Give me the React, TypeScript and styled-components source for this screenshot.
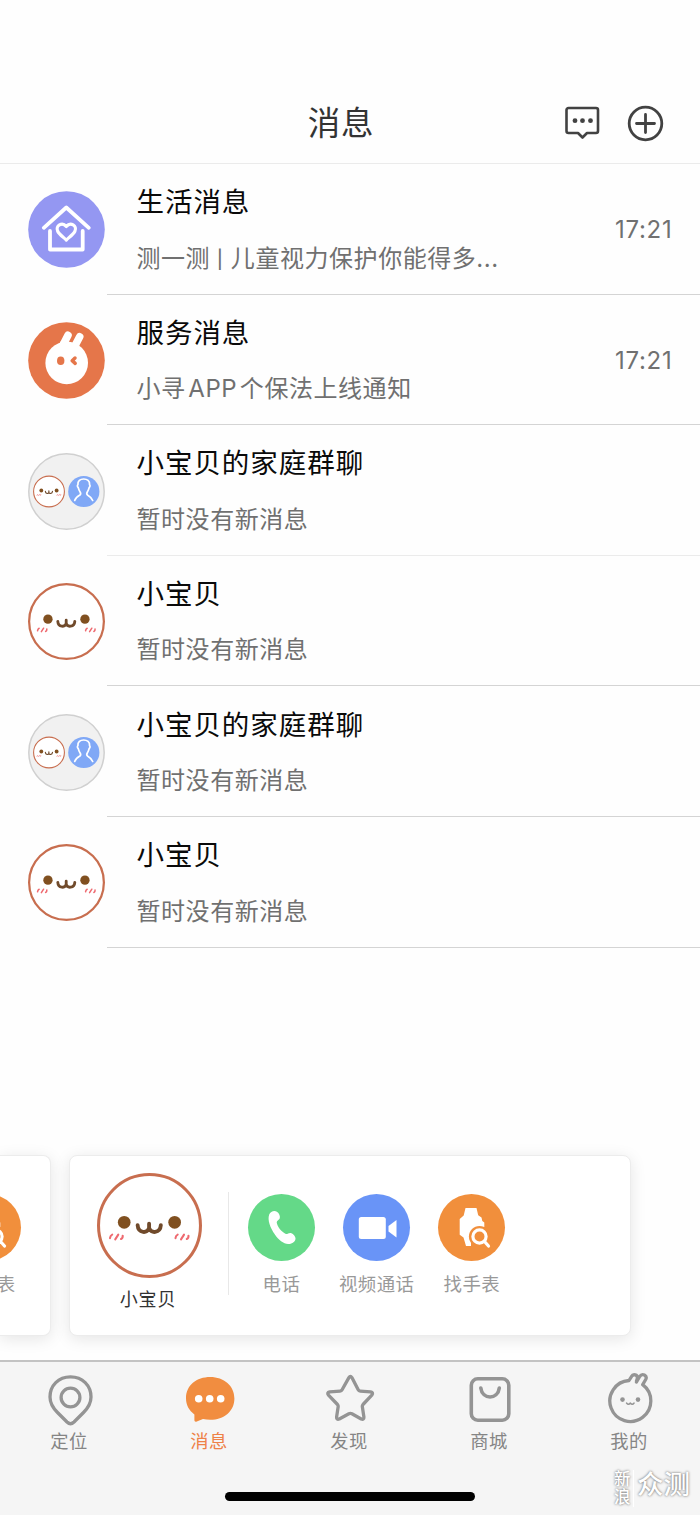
import React from 'react';
import styled, { createGlobalStyle } from 'styled-components';

const Global = createGlobalStyle`
  * { box-sizing: border-box; }
  body {
    margin: 0;
    background: #fefefe;
    font-family: Inter, "Noto Sans CJK SC", sans-serif;
  }
  svg { display: block; }
`;

const Screen = styled.div`
  width: 700px;
  height: 1515px;
  display: flex;
  flex-direction: column;
  overflow: hidden;
`;

const Header = styled.header`
  height: 164px;
  flex: none;
  padding: 83px 36px 0 0;
  display: grid;
  grid-template-columns: 1fr auto 1fr;
  align-items: center;
  border-bottom: 1px solid #ebebeb;
`;

const HeaderTitle = styled.h1`
  grid-column: 2;
  margin: 0 -36px 0 0;
  position: relative;
  left: -9px;
  top: 1px;
  font-size: 32.5px;
  font-weight: 400;
  letter-spacing: 0.7px;
  line-height: 80px;
  color: #333;
`;

const HeaderActions = styled.div`
  grid-column: 3;
  display: flex;
  align-items: center;
  justify-content: flex-end;
  gap: 27px;
`;

const List = styled.main`
  flex: none;
`;

const Row = styled.article`
  height: 130.6px;
  display: flex;
  padding-left: 28px;
`;

const Avatar = styled.div`
  width: 79px;
  flex: none;
  padding-top: 27.4px;
`;

const RowBody = styled.div<{ $faint?: boolean }>`
  flex: 1;
  display: flex;
  align-items: center;
  justify-content: space-between;
  padding: 0 28px 0 29.5px;
  border-bottom: 1px solid ${(p) => (p.$faint ? '#ebebeb' : '#d4d4d4')};
`;

const RowText = styled.div`
  height: 100%;
  padding-top: 18.2px;
`;

const RowTitle = styled.div`
  font-size: 27.5px;
  line-height: 40px;
  letter-spacing: 0.95px;
  color: #0a0a0a;
  white-space: nowrap;
`;

const RowSubtitle = styled.div`
  margin-top: 18.4px;
  font-size: 24px;
  line-height: 36px;
  letter-spacing: 0.55px;
  word-spacing: -4.6px;
  color: #707070;
  white-space: nowrap;
`;

const Bar = styled.span`
  position: relative;
  top: -1px;
  margin: 0 4.5px 0 4px;
  font-size: 18px;
  font-weight: 500;
`;

const Time = styled.time`
  position: relative;
  top: 1px;
  font-size: 24px;
  letter-spacing: 0.75px;
  margin-right: -0.5px;
  color: #707070;
`;

const Carousel = styled.section`
  margin-top: auto;
  flex: none;
  height: 205px;
  display: flex;
  align-items: flex-start;
  gap: 19px;
`;

const Card = styled.div`
  width: 562px;
  height: 181px;
  display: flex;
  border-radius: 8px;
  background: #fff;
  border: 1px solid #ececec;
  box-shadow: 0 3px 16px rgba(0, 0, 0, 0.1);
`;

const PreviousCard = styled(Card)`
  width: 50.5px;
  margin-right: -0.5px;
  justify-content: flex-end;
  padding-right: 28.7px;
  border-left: 0;
  border-radius: 0 8px 8px 0;
`;

const Contact = styled.div`
  width: 158px;
  display: flex;
  flex-direction: column;
  align-items: center;
  padding-top: 17px;
`;

const ContactName = styled.div`
  margin: 8px 2px 0 0;
  font-size: 18px;
  line-height: 27px;
  letter-spacing: 0.8px;
  color: #333;
`;

const CardDivider = styled.div`
  width: 1px;
  height: 103px;
  margin: 36px 19px 0 0;
  background: #e8e8e8;
`;

const Actions = styled.div`
  display: flex;
  gap: 28.2px;
`;

const Action = styled.div`
  width: 67px;
  flex: none;
  display: flex;
  flex-direction: column;
  align-items: center;
  padding-top: 38px;
`;

const ActionDisc = styled.div<{ $color: string }>`
  width: 67px;
  height: 67px;
  border-radius: 50%;
  background: ${(p) => p.$color};
`;

const ActionLabel = styled.div`
  margin-top: 10px;
  font-size: 18.4px;
  line-height: 26px;
  letter-spacing: 0.5px;
  white-space: nowrap;
  color: #999;
`;

const Footer = styled.footer`
  flex: none;
  height: 155px;
  position: relative;
  border-top: 2px solid #c3c3c3;
  background: #f5f5f5;
`;

const Tabs = styled.nav`
  display: flex;
`;

const Tab = styled.div<{ $active?: boolean }>`
  flex: 1;
  display: flex;
  flex-direction: column;
  align-items: center;
  padding-top: 10px;
  color: ${(p) => (p.$active ? '#ee8147' : '#858585')};
`;

const TabLabel = styled.div`
  margin: -1px 2px 0 0;
  font-size: 18.3px;
  line-height: 28px;
  letter-spacing: 0.4px;
`;

const HomeIndicator = styled.div`
  position: absolute;
  left: 225px;
  bottom: 14px;
  width: 250px;
  height: 9px;
  border-radius: 5px;
  background: #000;
`;

const Watermark = styled.div`
  position: absolute;
  left: 614px;
  top: 108px;
  display: flex;
  align-items: flex-start;
  color: #fff;
  text-shadow: 0 0 3px rgba(0, 0, 0, 0.42), 0 0 2px rgba(0, 0, 0, 0.3);
`;

const WatermarkSmall = styled.div`
  width: 20px;
  height: 37px;
  border-right: 1px solid #fff;
  font-size: 16.5px;
  font-weight: 500;
  line-height: 18px;
`;

const WatermarkLarge = styled.div`
  margin-left: 3px;
  font-size: 26.5px;
  line-height: 29px;
  font-weight: 500;
`;

/* Smiling face shared by the contact avatars, centred on (0,0) in a 76-unit circle */
const FaceShape = ({ ring = 2.2 }: { ring?: number }) => (
  <g>
    <circle r={38 - ring / 2} fill="#fff" stroke="#c86e4f" strokeWidth={ring} />
    <circle cx="-18.3" cy="-2.3" r="4.6" fill="#805020" />
    <circle cx="18.2" cy="-2.3" r="4.6" fill="#805020" />
    <path d="M-8.600 -.2C-8.200 5.800-1.200 6-.3 1.800V-1.300M-.3 1.800C.6 6 7.800 5.800 8.200-.2" fill="none" stroke="#704a2b" strokeWidth="2.800" strokeLinecap="round" />
    <path d="M-28.600 9.200q.2-2 1.600-2.600M-24.800 10l2.200-3.400M-20.600 9.800q1.400-.6 1.200-2.400M18.800 9.200q.2-2 1.600-2.600M22.800 10l2.200-3.400M27 9.800q1.400-.6 1.200-2.400" fill="none" stroke="#ee6a70" strokeWidth="1.500" strokeLinecap="round" />
  </g>
);

const FaceAvatar = ({ size = 77 }: { size?: number }) => (
  <svg width={size} height={size} viewBox="-38 -38 76 76">
    <FaceShape />
  </svg>
);

const GroupAvatar = () => (
  <svg width="77" height="77" viewBox="0 0 77 77">
    <circle cx="38.5" cy="38.5" r="37.7" fill="#f1f1f1" stroke="#d0d0d0" strokeWidth="1.5" />
    <g transform="translate(21 38.5) scale(.42)"><FaceShape ring={2.6} /></g>
    <circle cx="55.8" cy="38.5" r="15.6" fill="#80a8f6" />
    <path d="M46.700 47.500c.8-2.900 2.800-4 5-5.300 1.200-.8 1.100-2.100.4-3.200-1.100-1.600-1.400-2.600-1.900-4.500-.9-.8-1.100-2.100-.3-2.800-.3-3.700 2.300-5.700 5.800-5.700s6.200 2 5.900 5.700c.7.7.5 2-.4 2.800-.5 1.900-.9 2.900-1.900 4.500-.7 1.100-.7 2.400.5 3.200 2.200 1.300 4 2.400 4.900 5.300" fill="none" stroke="#fff" strokeWidth="1.700" strokeLinecap="round" />
  </svg>
);

const HouseAvatar = () => (
  <svg width="77" height="77" viewBox="0 0 77 77">
    <circle cx="38.500" cy="38.500" r="38.300" fill="#9497f2" />
    <g fill="none" stroke="#fff" strokeWidth="3.800" strokeLinecap="round" strokeLinejoin="round">
      <path d="M15.800 36.800L38.300 16.500l22.500 20.300" />
      <path d="M22 40v18.500h32.700V40" />
      <path strokeWidth="3.200" d="M38.300 35.500c-4.200-5.200-11.200-.8-8.600 4.700 1.600 3.200 5.400 5.800 8.600 8.800 3.200-3 7-5.600 8.600-8.800 2.600-5.500-4.400-9.900-8.600-4.700z" />
    </g>
  </svg>
);

const RabbitAvatar = () => (
  <svg width="77" height="77" viewBox="0 0 77 77">
    <circle cx="38.500" cy="38.500" r="38.300" fill="#e5764a" />
    <circle cx="38.700" cy="40.900" r="21.300" fill="#fff" />
    <path d="M34 25l6-11.700M45.500 26.500l6.200-11.700" stroke="#fff" strokeWidth="7.600" strokeLinecap="round" />
    <path d="M31 22.500L33 19l9 4.500 7-1-1.500 7H30z" fill="#fff" />
    <ellipse cx="32.700" cy="38.700" rx="3.700" ry="4.300" fill="#e5764a" />
    <path d="M47 36l-2.800 2.700 3 2.700" fill="none" stroke="#e5764a" strokeWidth="3.500" strokeLinecap="round" strokeLinejoin="round" />
  </svg>
);

const ChatIcon = () => (
  <svg width="36" height="36" viewBox="0 0 36 36" fill="none" stroke="#424242" strokeWidth="2.600" strokeLinejoin="round">
    <path d="M4.500 3H32a2 2 0 0 1 2 2v21a2 2 0 0 1-2 2H23L18.500 32.500 14 28H4.500a2 2 0 0 1-2-2V5a2 2 0 0 1 2-2z" />
    <g fill="#424242" stroke="none"><circle cx="11" cy="15.700" r="2.400" /><circle cx="18.500" cy="15.700" r="2.400" /><circle cx="26.500" cy="15.700" r="2.400" /></g>
  </svg>
);

const PlusIcon = () => (
  <svg width="37" height="37" viewBox="0 0 37 37" fill="none" stroke="#424242" strokeWidth="2.800">
    <circle cx="18.500" cy="18.500" r="16.300" />
    <path d="M9.500 18.500h18M18.500 9.500v18" strokeLinecap="round" />
  </svg>
);

const PhoneGlyph = () => (
  <svg width="67" height="67" viewBox="0 0 67 67">
    <path d="M21.200 20.500c1.300-3 5-4.500 7.700-2.800 2.300 1.400 3.400 4.300 2.900 6.500-.4 1.600-3.200 2.500-3.100 4 .3 4.100 4.800 9.700 9.200 11.700 1.300.6 2.500-1.200 4.600-1 2.600.3 5.400 3.700 5 6-.6 3.300-4.200 5.200-7.400 5.100-4.500-.2-9.700-4.400-13.200-9.600-4.700-6.500-7.700-14.400-5.700-19.900z" fill="#fff" />
  </svg>
);

const VideoGlyph = () => (
  <svg width="67" height="67" viewBox="0 0 67 67" fill="#fff">
    <rect x="15.800" y="23" width="27" height="22" rx="2.500" />
    <path d="M53.500 26v17.500L45.500 37.500v-5.500z" />
  </svg>
);

const WatchGlyph = () => (
  <svg width="67" height="67" viewBox="0 0 67 67">
    <path d="M27.500 14h11l1.700 7.200 3.300 2.300.8 3.500 2 1.500v4.500H43L33 44v8h-5l-2.500-8.500-3.800-2.700V25l4-3.500z" fill="#fff" />
    <circle cx="41.500" cy="42.500" r="10.600" fill="#f18f3c" />
    <circle cx="41.500" cy="42.500" r="6.600" fill="none" stroke="#fff" strokeWidth="3.200" />
    <path d="M46.500 47.500l4 4.500" stroke="#fff" strokeWidth="3.200" strokeLinecap="round" />
  </svg>
);

const tabIcon = { width: 56, height: 56, viewBox: '0 0 56 56', fill: 'none', stroke: '#949494', strokeWidth: 3.3, strokeLinejoin: 'round' as const, strokeLinecap: 'round' as const };

const PinIcon = () => (
  <svg {...tabIcon}>
    <path d="M28.500 4.800C16.500 4.800 8 13.500 8 25c0 6.500 3 11 7.500 15.500L25 50q3.500 3.300 7 0l9.500-9.500C46 36 49 31.500 49 25 49 13.500 40.500 4.800 28.500 4.800z" />
    <circle cx="28.500" cy="25.500" r="9.400" />
  </svg>
);

const MessageIcon = () => (
  <svg {...tabIcon} stroke="none" fill="#f18d40">
    <path d="M28.200 5C14.500 5 4 13.500 4 26c0 7.400 3 12.200 8.400 16.500V48c0 1.500 1 2 2.400 1.400l6.200-2.400c2.300.6 4.700.8 7.200.8C42 47.800 52.400 39 52.400 26.400S42 5 28.200 5z" />
    <g fill="#fff"><circle cx="16.700" cy="26.800" r="3.800" /><circle cx="27.700" cy="26.800" r="3.800" /><circle cx="38.700" cy="26.800" r="3.800" /></g>
  </svg>
);

const StarIcon = () => (
  <svg {...tabIcon}>
    <path d="M26.900 5.600q1.500-2.400 3 0L36.200 17.800q.6 1.200 2 1.300l10.400.7q3.200.8 1.200 3.300L41 32.500q-.8.900-.7 2.100l1.600 10.400q.2 3-2.700 2L29.900 41.800q-1.500-.7-3 0L17.300 47q-2.900 1-2.700-2l1.600-10.400q.1-1.200-.7-2.100L6.500 23.100q-2-2.500 1.200-3.300l10.400-.7q1.400-.1 2-1.300z" />
  </svg>
);

const BagIcon = () => (
  <svg {...tabIcon} strokeWidth="3.600">
    <rect x="9.300" y="6.800" width="37.500" height="41.400" rx="6.500" />
    <path d="M18.800 16c1.500 12 17 12 18.500 0" />
  </svg>
);

const MineIcon = () => (
  <svg {...tabIcon}>
    <path d="M27 8.500A20.500 20.500 0 1 0 40.700 12.600L43.700 7.500C45.700 3.300 40.200 .8 37.700 4.500L34.500 10M27 8.500L29.300 4.800C31.200 1.300 36 2.600 35.300 6.500L34.500 9" />
    <g fill="#949494" stroke="none"><circle cx="20.500" cy="27.600" r="2.300" /><circle cx="36" cy="27.600" r="2.300" /></g>
    <path d="M24.500 31q2 2.600 3.800 0q2 2.600 3.800 0" strokeWidth="1.400" />
  </svg>
);

type Message = { avatar: React.ReactNode; title: string; text: React.ReactNode; time?: string; faint?: boolean };

const messages: Message[] = [
  { avatar: <HouseAvatar />, title: '生活消息', text: <>测一测 <Bar>|</Bar> 儿童视力保护你能得多...</>, time: '17:21' },
  { avatar: <RabbitAvatar />, title: '服务消息', text: '小寻 APP 个保法上线通知', time: '17:21' },
  { avatar: <GroupAvatar />, title: '小宝贝的家庭群聊', text: '暂时没有新消息', faint: true },
  { avatar: <FaceAvatar />, title: '小宝贝', text: '暂时没有新消息' },
  { avatar: <GroupAvatar />, title: '小宝贝的家庭群聊', text: '暂时没有新消息' },
  { avatar: <FaceAvatar />, title: '小宝贝', text: '暂时没有新消息' },
];

const tabs = [
  { icon: <PinIcon />, label: '定位' },
  { icon: <MessageIcon />, label: '消息', active: true },
  { icon: <StarIcon />, label: '发现' },
  { icon: <BagIcon />, label: '商城' },
  { icon: <MineIcon />, label: '我的' },
];

const CardAction = ({ color, label, children }: { color: string; label: string; children: React.ReactNode }) => (
  <Action>
    <ActionDisc $color={color}>{children}</ActionDisc>
    <ActionLabel>{label}</ActionLabel>
  </Action>
);

export default function App() {
  return (
    <Screen>
      <Global />
      <Header>
        <HeaderTitle>消息</HeaderTitle>
        <HeaderActions>
          <ChatIcon />
          <PlusIcon />
        </HeaderActions>
      </Header>
      <List>
        {messages.map((m, i) => (
          <Row key={i}>
            <Avatar>{m.avatar}</Avatar>
            <RowBody $faint={m.faint}>
              <RowText>
                <RowTitle>{m.title}</RowTitle>
                <RowSubtitle>{m.text}</RowSubtitle>
              </RowText>
              {m.time && <Time>{m.time}</Time>}
            </RowBody>
          </Row>
        ))}
      </List>
      <Carousel>
        <PreviousCard>
          <CardAction color="#f18f3c" label="找手表"><WatchGlyph /></CardAction>
        </PreviousCard>
        <Card>
          <Contact>
            <FaceAvatar size={105} />
            <ContactName>小宝贝</ContactName>
          </Contact>
          <CardDivider />
          <Actions>
            <CardAction color="#64d988" label="电话"><PhoneGlyph /></CardAction>
            <CardAction color="#6994f7" label="视频通话"><VideoGlyph /></CardAction>
            <CardAction color="#f18f3c" label="找手表"><WatchGlyph /></CardAction>
          </Actions>
        </Card>
      </Carousel>
      <Footer>
        <Tabs>
          {tabs.map((t) => (
            <Tab key={t.label} $active={t.active}>
              {t.icon}
              <TabLabel>{t.label}</TabLabel>
            </Tab>
          ))}
        </Tabs>
        <HomeIndicator />
        <Watermark>
          <WatermarkSmall>新<br />浪</WatermarkSmall>
          <WatermarkLarge>众测</WatermarkLarge>
        </Watermark>
      </Footer>
    </Screen>
  );
}
